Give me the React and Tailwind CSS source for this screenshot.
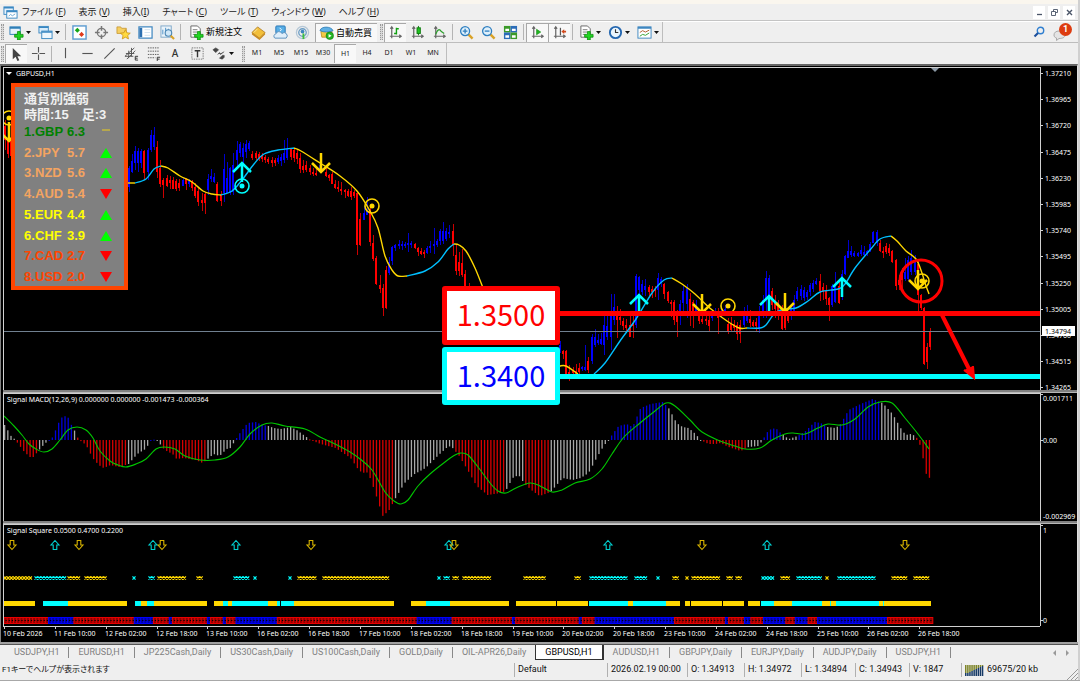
import { clsx } from 'clsx'

const STEP = 3.178
const YELLOW = '#ffd700'
const CYAN = '#00ffff'

const MENUS = [
  ['ファイル ', 'F'],
  ['表示 ', 'V'],
  ['挿入', 'I'],
  ['チャート ', 'C'],
  ['ツール ', 'T'],
  ['ウィンドウ ', 'W'],
  ['ヘルプ ', 'H'],
]

const STRENGTH = [
  { code: 'GBP', value: '6.3', dir: 'flat', color: 'text-[#008000]' },
  { code: 'JPY', value: '5.7', dir: 'up', color: 'text-[#f4a460]' },
  { code: 'NZD', value: '5.6', dir: 'up', color: 'text-[#f4a460]' },
  { code: 'AUD', value: '5.4', dir: 'down', color: 'text-[#f4a460]' },
  { code: 'EUR', value: '4.4', dir: 'up', color: 'text-[#ffff00]' },
  { code: 'CHF', value: '3.9', dir: 'up', color: 'text-[#ffff00]' },
  { code: 'CAD', value: '2.7', dir: 'down', color: 'text-[#ff4500]' },
  { code: 'USD', value: '2.0', dir: 'down', color: 'text-[#ff4500]' },
]

const TABS = [
  'USDJPY,H1', 'EURUSD,H1', 'JP225Cash,Daily', 'US30Cash,Daily', 'US100Cash,Daily', 'GOLD,Daily',
  'OIL-APR26,Daily', 'GBPUSD,H1', 'AUDUSD,H1', 'GBPJPY,Daily', 'EURJPY,Daily', 'AUDJPY,Daily', 'USDJPY,H1',
]

const PRICES = [
  '1.37210', '1.36965', '1.36720', '1.36475', '1.36230', '1.35985', '1.35740',
  '1.35495', '1.35250', '1.35005', '1.34760', '1.34515', '1.34265',
]

const TIMES = [
  '10 Feb 2026', '11 Feb 10:00', '12 Feb 02:00', '12 Feb 18:00', '13 Feb 10:00', '16 Feb 02:00', '16 Feb 18:00',
  '17 Feb 10:00', '18 Feb 02:00', '18 Feb 18:00', '19 Feb 10:00', '20 Feb 02:00', '20 Feb 18:00', '23 Feb 10:00',
  '24 Feb 02:00', '24 Feb 18:00', '25 Feb 10:00', '26 Feb 02:00', '26 Feb 18:00',
]

// one run per visible stretch: first x, then "side high low [open close]"
const CANDLES = [
  [5, 'R 120 150 126 140,R 126 158 138 154,R 130 158 140 156'],
  [128.5, 'B 166 192 168 187,B 154 173 161 172,B 146 170 151 163,B 148 172 151 163,B 149 168 151 163,R 150 180 151 173,B 148 180 150 172,B 130 152 135 150,B 127 150 135 147,R 141 178 147 172,R 160 187 168 184,R 178 198 180 185,R 175 187 178 186,R 176 189 180 183,R 177 188 180 189,R 179 191 181 189,R 179 191 183 188,B 178 186 180 186,R 178 190 179 184,B 179 187 181 184,R 180 191 181 188,R 183 198 187 196,R 188 206 191 202,R 193 211 200 203,R 192 214 194 203,B 174 195 179 190,B 169 182 176 179,B 173 183 177 182,R 182 202 184 201,R 191 206 195 201,B 154 202 169 193,B 162 193 178 193,B 167 195 168 192,B 153 195 165 192,B 141 167 150 160,B 142 157 144 153,B 143 163 148 157,B 140 158 144 152,B 141 151 143 149,R 151 160 154 158,R 151 160 153 158,R 152 161 154 158,R 153 162 156 159,R 155 163 157 160,R 157 164 159 162,R 157 167 160 163,R 158 166 160 163,B 155 164 158 162,B 154 166 157 161,B 140 163 153 160,B 138 160 149 158,R 148 160 149 157,R 148 162 150 158,R 149 164 153 159,R 153 173 158 169,R 160 173 166 170,R 161 172 165 170,R 165 175 168 172,R 168 176 172 174,R 169 176 173 175,B 165 172 169 171,B 168 172 170 172,R 168 177 172 176,R 174 181 175 178,R 172 184 174 184,R 180 189 184 188,R 181 192 187 189,R 182 195 189 191,R 189 198 190 192,R 189 197 191 196,R 187 200 191 197,R 190 198 192 196,R 193 255 193 245,R 213 246 219 245,B 206 220 213 220,B 197 215 211 215,R 205 246 209 242,R 235 261 243 259,R 256 285 258 284,R 275 293 285 289,R 284 316 288 308,R 266 309 270 308,B 257 275 262 273,B 246 265 247 261,B 244 251 245 248,B 240 249 244 246,B 241 250 244 246,B 242 248 244 246,B 233 252 243 245,B 241 248 243 245,R 243 249 244 248,R 247 256 248 252,R 248 255 251 254,R 250 258 252 254,B 246 254 248 253,B 241 253 246 248,B 228 254 244 246,B 239 247 241 245,B 229 245 231 241,B 222 244 231 241,B 228 241 231 239,B 225 238 232 234,R 224 256 231 245,R 244 275 255 271,R 252 276 262 271,R 249 277 263 275,R 270 290 274 286,R 283 290 286 290'],
  [560, 'B 341 353 345 350,R 350 359 351 354,R 350 379 351 374,R 365 381 372 376,R 367 374 371 373,R 364 376 371 374,R 363 374 368 372,B 366 371 367 369,B 345 371 367 370,R 357 373 361 370,B 334 364 337 361,B 329 347 337 345,B 334 345 340 343,B 333 345 339 344,B 315 355 325 345,B 315 340 326 337,B 294 350 311 337,B 294 325 307 320,R 306 338 316 320,R 309 325 317 320,R 318 330 321 326,R 319 333 325 328,R 315 337 325 337,R 314 338 323 326,B 274 328 276 325,B 276 296 277 290,B 280 295 284 292,B 279 296 286 290,R 285 296 287 292,R 286 298 289 292,R 286 297 289 291,B 273 300 278 290,B 277 287 279 283,R 283 299 284 294,R 291 303 292 301,R 300 317 302 304,R 300 325 302 320,R 310 337 313 322,B 300 325 304 315,B 286 312 291 303,B 284 318 288 304,R 293 326 299 315,R 300 328 302 312,B 300 315 306 312,R 313 324 316 321,R 314 324 319 322,R 316 325 319 321,R 315 332 320 326,B 312 321 314 318,B 308 316 312 315,R 308 334 314 318,B 310 318 312 316,B 305 315 309 313,R 318 334 324 331,R 317 332 324 330,R 320 331 324 328,R 322 340 325 334,R 320 343 325 334,B 307 327 315 325,B 305 323 313 321,R 310 327 319 323,R 320 327 322 326,R 318 331 322 326,B 306 333 312 328,B 295 318 300 314,B 271 318 278 300,B 275 300 278 296,R 288 310 291 305,R 295 318 303 309,R 300 320 306 312,R 305 330 310 329,R 312 330 315 328,R 313 323 316 321,B 305 320 308 316,B 295 315 300 312,B 287 301 291 299,B 285 300 289 296,B 287 301 290 298,B 290 300 292 297,B 283 296 285 292,B 280 292 283 289,B 278 285 281 284,R 274 301 281 291,R 283 300 287 292,R 285 305 291 299,R 297 321 298 305,B 284 307 286 305,B 272 303 286 302,R 282 304 286 303,B 270 300 274 290,B 255 275 256 274,B 240 258 251 258,B 246 257 251 255,B 251 257 253 256,B 252 257 253 256,B 245 256 250 254,B 246 256 252 255,B 250 256 251 253,B 242 252 244 250,B 231 243 232 243,B 230 246 232 243,R 240 252 243 251,R 247 258 251 253,R 243 254 246 252,R 244 256 248 253,R 250 263 251 262,R 259 290 260 286,R 275 290 280 285,R 268 288 274 280,B 258 281 272 279,B 256 281 260 279,B 250 275 258 272,B 255 275 262 272,R 261 311 264 295,R 294 310 295 308,R 307 365 308 364,R 343 369 347 362,R 328 350 331 347'],
]

const AVERAGE = [
  [YELLOW, '128,183 135,183'],
  ['#00bfff', '135,183 146,179 154,169 161,166'],
  [YELLOW, '161,166 168,168 180,176 192,182 203,191 212,194 221,195'],
  ['#00bfff', '221,195 232,191 242,180 254,164 264,154 278,150 294,148'],
  [YELLOW, '294,148 301,151 320,163 340,176 357,191 370,211 378,228 385,256 392,270 398,276 407,276'],
  ['#00bfff', '407,276 425,271 438,262 448,249 454,244'],
  [YELLOW, '454,244 459,245 466,251 475,268 483,288'],
  [YELLOW, '560,366 566,366 578,374'],
  ['#00bfff', '594,374 605,363 620,341 636,319 652,293 664,280 672,278'],
  [YELLOW, '672,278 682,284 695,294 711,309 727,321 739,328 747,328'],
  ['#00bfff', '747,328 760,328 766,325 775,313 785,309 796,308 808,301 820,292 838,289 845,284 855,268 870,250 880,239 891,236'],
  [YELLOW, '891,236 897,241 906,251 916,259 922,273 925,283 929,294'],
]

const MACD_KEYS = [
  [4, 15], [7, 10], [11, 3], [14, 1], [17, -3], [23, -11], [29, -17], [33, -17], [36, -13], [41, -7], [46, -2], [50, 0],
  [52, 3], [55, 10], [60, 22], [65, 24], [68, 22], [72, 12], [75, 8], [78, 0], [82, -2], [86, -6], [92, -18], [98, -25],
  [103, -28], [110, -25], [118, -27], [128, -24], [133, -18], [138, -13], [145, -9], [150, -1], [155, 1], [158, -1],
  [161, -7], [166, -11], [172, -14], [176, -19], [183, -18], [195, -20], [202, -23], [207, -19], [213, -14], [219, -16],
  [226, -9], [230, -8], [233, -3], [236, 2], [240, 8], [247, 17], [255, 18], [262, 15], [268, 14], [273, 12], [280, 11],
  [290, 13], [296, 10], [303, 5], [310, 0], [320, -4], [335, -8], [350, -18], [358, -30], [362, -33], [366, -32],
  [370, -39], [377, -60], [382, -76], [388, -71], [395, -58], [404, -43], [414, -34], [425, -28], [438, -15], [448, -6],
  [452, -8], [458, -15], [467, -30], [476, -46], [487, -55], [500, -53], [505, -51], [512, -38], [518, -35], [524, -44],
  [532, -51], [539, -56], [550, -52], [562, -38], [572, -40], [580, -38], [588, -33], [596, -18], [603, -6], [608, 0],
  [612, 6], [618, 14], [626, 16], [632, 13], [640, 32], [650, 36], [662, 38], [668, 32], [676, 17], [682, 13], [688, 12],
  [695, 6], [700, 0], [708, -4], [715, -4], [720, -3], [728, -7], [740, -11], [748, -7], [758, -6], [762, 0], [768, 10],
  [775, 12], [780, 7], [788, 1], [797, 4], [805, 9], [814, 18], [820, 17], [827, 13], [835, 12], [840, 16], [848, 30],
  [860, 36], [872, 41], [882, 37], [892, 26], [900, 12], [905, 5], [910, 6], [915, 4], [918, -1], [921, -10], [925, -33],
  [928, -37], [931, -40],
]

const MACD_COLORS = [
  [15, 'G'], [38, 'R'], [47, 'G'], [73, 'B'], [76, 'G'], [127, 'R'], [150, 'G'], [156, 'B'], [161, 'G'], [206, 'R'],
  [234, 'G'], [266, 'B'], [308, 'G'], [393, 'R'], [455, 'G'], [504, 'R'], [523, 'G'], [548, 'R'], [609, 'G'], [666, 'B'],
  [702, 'G'], [745, 'R'], [763, 'G'], [782, 'B'], [797, 'G'], [826, 'B'], [839, 'G'], [880, 'B'], [915, 'G'], [999, 'R'],
]

const SIGNAL =
  '4,416 14,426 22,435 29,444 36,449 44,452 52,449 60,440 68,430 77,427 86,430 93,438 100,451 110,461 118,465 126,467 136,464 146,459 156,449 164,447 175,449 185,456 200,460 215,460 228,457 240,447 250,434 262,425 272,423 285,426 305,429 320,437 335,444 350,452 360,459 372,470 385,492 394,501 401,504 408,500 418,486 430,474 445,462 455,455 461,453 468,455 478,467 490,483 498,491 506,493 516,488 530,483 540,486 552,492 562,490 575,483 590,479 602,469 612,454 624,437 640,423 655,411 666,403 675,406 690,420 702,432 720,441 735,446 745,449 760,448 772,440 785,434 793,433 805,434 818,428 828,424 842,425 855,419 868,407 880,402 892,403 905,418 918,434 929,449'

const CROSSES = [
  ['Y', 5, 33], ['C', 36, 66], ['Y', 69, 80], ['Y', 86, 106], ['C', 134, 135], ['C', 150, 154], ['Y', 159, 186],
  ['Y', 198, 204], ['C', 235, 249], ['C', 255, 256], ['C', 290, 291], ['Y', 299, 315], ['Y', 324, 389], ['C', 439, 440],
  ['C', 445, 449], ['Y', 454, 458], ['Y', 464, 491], ['Y', 525, 545], ['Y', 576, 580], ['C', 591, 627], ['C', 636, 646],
  ['C', 658, 659], ['Y', 674, 678], ['Y', 687, 688], ['Y', 693, 719], ['Y', 728, 732], ['Y', 737, 741], ['C', 763, 773],
  ['Y', 782, 789], ['C', 798, 821], ['Y', 827, 828], ['C', 839, 874], ['Y', 893, 907], ['Y', 915, 929],
]

const SQUARES = [
  ['Y', 4, 35], ['C', 43, 68], ['Y', 68, 127], ['C', 135, 141], ['Y', 141, 147], ['C', 147, 154], ['Y', 154, 207],
  ['Y', 214, 223], ['C', 223, 228], ['Y', 228, 232], ['C', 232, 268], ['Y', 268, 277], ['C', 277, 280], ['C', 281, 294],
  ['Y', 294, 394], ['Y', 411, 426], ['C', 426, 450], ['Y', 450, 509], ['Y', 516, 556], ['Y', 557, 588], ['C', 589, 628],
  ['Y', 628, 633], ['C', 633, 666], ['Y', 666, 680], ['Y', 685, 690], ['Y', 691, 722], ['Y', 723, 744], ['Y', 748, 760],
  ['C', 761, 774], ['Y', 774, 792], ['C', 792, 822], ['Y', 822, 830], ['C', 830, 831], ['Y', 831, 836], ['C', 836, 879],
  ['Y', 879, 883], ['C', 883, 884], ['Y', 884, 931],
]

const BLUE_RUNS = [
  [48, 73], [134, 153], [168, 171], [205, 209], [222, 225], [233, 276], [288, 290], [416, 449], [512, 515], [579, 582],
  [593, 674], [724, 727], [744, 750], [762, 784], [794, 807], [816, 887],
]

const MARKS = [
  ['down', 12], ['up', 55], ['down', 79], ['up', 153], ['down', 162], ['up', 236], ['down', 311], ['up', 449],
  ['down', 454], ['up', 608], ['down', 702], ['up', 767], ['down', 905],
]

function toPoints(text) {
  return text.split(' ').map((p) => p.split(',').map(Number))
}

function smooth(text) {
  const p = toPoints(text)
  let d = `M${p[0][0]} ${p[0][1]}`
  for (let i = 0; i < p.length - 1; i++) {
    const a = p[i - 1] || p[i]
    const b = p[i]
    const c = p[i + 1]
    const e = p[i + 2] || c
    d += ` C${b[0] + (c[0] - a[0]) / 6} ${b[1] + (c[1] - a[1]) / 6} ${c[0] - (e[0] - b[0]) / 6} ${c[1] - (e[1] - b[1]) / 6} ${c[0]} ${c[1]}`
  }
  return d
}

function macdAt(x) {
  const i = MACD_KEYS.findIndex((k) => k[0] >= x)
  if (i <= 0) return MACD_KEYS[0][1]
  const [x0, v0] = MACD_KEYS[i - 1]
  const [x1, v1] = MACD_KEYS[i]
  return v0 + ((v1 - v0) * (x - x0)) / (x1 - x0)
}

/* ---------- toolbar pieces ---------- */

function Icon({ children }) {
  return (
    <svg width="15" height="15" viewBox="0 0 16 16" fill="none" className="shrink-0" aria-hidden="true">
      {children}
    </svg>
  )
}

function Caret() {
  return (
    <svg width="5" height="3" viewBox="0 0 5 3" className="shrink-0" aria-hidden="true">
      <path d="M0 0h5L2.500 3z" fill="#111" />
    </svg>
  )
}

function Tool({ label, pressed, menu, children }) {
  return (
    <button
      type="button"
      aria-label={label}
      className={clsx(
        'flex h-[19px] items-center text-[#333]',
        menu ? 'w-[29px] gap-[2px] pl-1' : 'w-[22px] justify-center',
        pressed && 'border-t border-l border-[#a8a8a8] bg-[#f8f8f8]',
      )}
    >
      {children}
      {menu && <Caret />}
    </button>
  )
}

function Divider() {
  return <span className="mx-[2px] h-4 w-px bg-[#b4b4b4]" />
}

function Grip() {
  return <span className="mx-[1px] h-4 w-[3px] border-x border-dotted border-[#9a9a9a] bg-[#d8d8d8]" />
}

const plus = <path d="M9 7h3v3h3v3h-3v3H9v-3H6v-3h3z" fill="#22d422" stroke="#078a07" strokeWidth=".8" />
const axes = <path d="M4 2v12M2 12h12M2.500 4L4 2l1.500 2M12 10.500L14 12l-2 1.500" stroke="#666" strokeWidth="1.300" />

const NewChartIcon = () => (
  <Icon>
    <rect x="1" y="2" width="11" height="8" fill="#e6f2fb" stroke="#2f7fb8" />
    <path d="M1 3h11" stroke="#2f7fb8" strokeWidth="2" />
    {plus}
  </Icon>
)
const ProfilesIcon = () => (
  <Icon>
    <rect x="1" y="1.500" width="10" height="7" fill="#d9ecfa" stroke="#3a88c2" />
    <rect x="4" y="6.500" width="11" height="8" fill="#eef7fd" stroke="#3a88c2" />
    <path d="M1 2.500h10M4 7.500h11" stroke="#3a88c2" strokeWidth="1.500" />
  </Icon>
)
const MarketIcon = () => (
  <Icon>
    <rect x="1" y="1" width="14" height="14" fill="#fff" stroke="#5b9bd0" strokeWidth="1.500" />
    <path d="M3 5.500l2.700-2.700 2.700 2.700-2.700 2.700z" fill="#16a516" />
    <path d="M7.500 10l2.700-2.700 2.700 2.700-2.700 2.700z" fill="#e03a1c" />
  </Icon>
)
const CrossIcon = () => (
  <Icon>
    <circle cx="8" cy="8" r="4.500" stroke="#777" strokeWidth="1.400" />
    <path d="M8 1v5M8 10v5M1 8h5M10 8h5" stroke="#777" strokeWidth="1.600" />
  </Icon>
)
const FavoritesIcon = () => (
  <Icon>
    <path d="M1 2h4l1 1.500h5V9H1z" fill="#f5cf62" stroke="#c4922a" strokeWidth=".8" />
    <path d="M10 5l1.600 3.300 3.600.4-2.700 2.500.8 3.600-3.300-1.800-3.300 1.800.8-3.600-2.700-2.500 3.600-.4z" fill="#ffd93f" stroke="#c88e14" strokeWidth=".8" />
  </Icon>
)
const TerminalIcon = () => (
  <Icon>
    <rect x="1" y="2" width="14" height="12" fill="#fff" stroke="#3f87c0" strokeWidth="1.300" />
    <path d="M3 3v10" stroke="#2c6fb0" strokeWidth="3" />
    <path d="M7 5h6M7 8h6M7 11h6" stroke="#cfe0ee" />
  </Icon>
)
const TesterIcon = () => (
  <Icon>
    <rect x="1" y="1" width="11" height="12" fill="#eaf3fa" stroke="#7fa8c8" />
    <path d="M3 10V5M6 9V3M9 8V4" stroke="#4a90c8" />
    <circle cx="9" cy="8.500" r="3.500" fill="#cfe7f8" stroke="#4a86b4" strokeWidth="1.200" />
    <path d="M11.500 11.500l3.500 3.500" stroke="#d9a227" strokeWidth="2.200" />
  </Icon>
)
const OrderIcon = () => (
  <Icon>
    <path d="M2 1h7l3 3v9H2z" fill="#fff" stroke="#666" />
    <path d="M4 5h5M4 7.500h5M4 10h3" stroke="#777" />
    {plus}
  </Icon>
)
const MetaEditorIcon = () => (
  <Icon>
    <path d="M1 8l6-6 8 6-6 6z" fill="#f2bf3a" stroke="#a8741a" strokeWidth=".8" />
    <path d="M1 8l8 6v2L1 10zM9 14l6-6v2l-6 6z" fill="#c98a1f" />
    <path d="M3 8l4-4" stroke="#fbe7a2" />
  </Icon>
)
const CloudIcon = () => (
  <Icon>
    <rect x="3" y="1" width="10" height="8" rx="1" fill="#58aee6" stroke="#2775b4" />
    <path d="M7 3l2 2-2 2" stroke="#fff" />
    <path d="M2 14a2.500 2.500 0 0 1 1-4.500A3.500 3.500 0 0 1 9.500 9 2.800 2.800 0 0 1 14 14z" fill="#dfeefa" stroke="#5a8fbc" />
  </Icon>
)
const SignalsIcon = () => (
  <Icon>
    <circle cx="8" cy="8" r="6.500" stroke="#b5c7d6" strokeWidth="1.400" />
    <circle cx="8" cy="8" r="4" stroke="#6a9cc4" strokeWidth="1.400" />
    <circle cx="8" cy="7" r="2" fill="#3d85bd" />
    <path d="M9 15V9" stroke="#3fbf3f" strokeWidth="2" />
  </Icon>
)
const AutoIcon = () => (
  <Icon>
    <path d="M2 7l6-4 6 4-1 6H3z" fill="#f3c947" stroke="#b5861a" strokeWidth=".8" />
    <path d="M1 6c1-5 12-5 14 0-4 2-10 2-14 0z" fill="#5fb0e4" stroke="#2b7ab4" strokeWidth=".8" />
    <circle cx="11.500" cy="11.500" r="4" fill="#22b422" stroke="#0b7a0b" strokeWidth=".6" />
    <path d="M10.200 9.500l3.200 2-3.200 2z" fill="#fff" />
  </Icon>
)
const ZoomIcon = ({ minus }) => (
  <Icon>
    <path d="M9.500 9.500L14.500 14.500" stroke="#d9a227" strokeWidth="2.600" />
    <circle cx="6.500" cy="6.500" r="4.800" fill="#dff0fb" stroke="#2f7fc0" strokeWidth="1.400" />
    <path d={minus ? 'M4 6.500h5' : 'M4 6.500h5M6.500 4v5'} stroke="#2f7fc0" strokeWidth="1.400" />
  </Icon>
)
const TileIcon = () => (
  <Icon>
    <rect x="1" y="1" width="7" height="7" fill="#3a9a28" />
    <rect x="8" y="1" width="7" height="7" fill="#2b6cb8" />
    <rect x="1" y="8" width="7" height="7" fill="#2b6cb8" />
    <rect x="8" y="8" width="7" height="7" fill="#3a9a28" />
    <path d="M2.500 4h4v2.500h-4zM9.500 4h4v2.500h-4zM2.500 11h4v2.500h-4zM9.500 11h4v2.500h-4z" fill="#fff" />
  </Icon>
)
const ClockIcon = () => (
  <Icon>
    <circle cx="8" cy="8" r="6" fill="#eaf5fd" stroke="#2467b0" strokeWidth="2" />
    <path d="M8 4.500V8h3" stroke="#333" strokeWidth="1.200" />
  </Icon>
)
const TemplateIcon = () => (
  <Icon>
    <rect x="1" y="2" width="14" height="12" fill="#fff" stroke="#3f87c0" />
    <path d="M1 3h14" stroke="#3f87c0" strokeWidth="2" />
    <path d="M3 8l3-2 3 1.500 4-2" stroke="#b05a2c" />
    <path d="M3 12l3-2 3 1 4-2.500" stroke="#2fa02f" />
  </Icon>
)

function MainToolbar() {
  return (
    <div className="flex h-[21px] items-center border-b border-[#bdbdbd] pr-1">
      <div className="flex h-full items-center border-r border-[#bdbdbd]">
        <Grip />
        <Tool label="新規チャート" menu><NewChartIcon /></Tool>
        <Tool label="組表示" menu><ProfilesIcon /></Tool>
        <Divider />
        <Tool label="気配値表示"><MarketIcon /></Tool>
        <Tool label="データウィンドウ"><CrossIcon /></Tool>
        <Tool label="ナビゲーター"><FavoritesIcon /></Tool>
        <Tool label="ターミナル"><TerminalIcon /></Tool>
        <Tool label="ストラテジーテスター"><TesterIcon /></Tool>
        <Divider />
        <button type="button" className="flex h-[19px] w-16 items-center gap-[2px] pl-[6px] text-[9px] whitespace-nowrap text-black">
          <OrderIcon />新規注文
        </button>
        <Tool label="MetaEditor"><MetaEditorIcon /></Tool>
        <Tool label="VPS"><CloudIcon /></Tool>
        <Tool label="シグナル"><SignalsIcon /></Tool>
        <button type="button" className="mx-[2px] flex h-[19px] w-[62px] items-center gap-[2px] border-t border-l border-[#a8a8a8] bg-[#f8f8f8] pl-[3px] text-[9px] whitespace-nowrap text-black">
          <AutoIcon />自動売買
        </button>
        <Grip />
        <Tool label="バーチャート" pressed>
          <Icon>{axes}<path d="M9 3v7M9 4h2.500M6.500 9H9" stroke="#12a012" strokeWidth="1.500" /></Icon>
        </Tool>
        <Tool label="ローソク足">
          <Icon>{axes}<path d="M9 1v10" stroke="#0b7a0b" /><rect x="7.500" y="3" width="3.500" height="6" fill="#22c522" stroke="#0b7a0b" /></Icon>
        </Tool>
        <Tool label="ラインチャート">
          <Icon>{axes}<path d="M4 10c2-6 4-6 6-3l3 2" stroke="#2fa02f" strokeWidth="1.300" /></Icon>
        </Tool>
        <Divider />
        <Tool label="拡大"><ZoomIcon /></Tool>
        <Tool label="縮小"><ZoomIcon minus /></Tool>
        <Tool label="整列"><TileIcon /></Tool>
        <Divider />
        <Tool label="自動スクロール" pressed>
          <Icon>{axes}<path d="M7 4.500v6L11.500 7.500z" fill="#22b422" stroke="#0b8a0b" strokeWidth=".6" /></Icon>
        </Tool>
        <Tool label="チャートシフト" pressed>
          <Icon>{axes}<path d="M9 3v8" stroke="#555" strokeWidth="1.300" /><path d="M10 7l3-2.500V6h2v2h-2v1.500z" fill="#d2491c" /></Icon>
        </Tool>
        <Divider />
        <Tool label="インディケーター" menu><OrderIcon /></Tool>
        <Tool label="時間足設定" menu><ClockIcon /></Tool>
        <Tool label="定型チャート" menu><TemplateIcon /></Tool>
      </div>
      <div className="ml-auto flex items-center gap-2 pr-[2px]">
        <button type="button" aria-label="検索" className="flex">
          <svg width="12" height="12" viewBox="0 0 12 12" fill="none" aria-hidden="true">
            <circle cx="7.500" cy="4.500" r="3.200" stroke="#2f7fd0" strokeWidth="1.400" />
            <path d="M5 7L1.500 10.500" stroke="#1c4f9c" strokeWidth="2.200" />
          </svg>
        </button>
        <button type="button" aria-label="通知" className="relative flex h-[18px] w-[19px] items-end">
          <svg width="13" height="11" viewBox="0 0 13 11" aria-hidden="true">
            <path d="M6 1c3.500 0 6 1.500 6 4S9.500 8.500 6 8.500L3.500 10.500V8C1.500 7.300 1 6.500 1 5c0-2.500 2-4 5-4z" fill="#e4e4e4" stroke="#aaa" />
          </svg>
          <span className="absolute top-0 right-0 flex size-[13px] items-center justify-center rounded-full bg-[#dd3c10] font-['Roboto',sans-serif] text-[9px] font-bold text-white">1</span>
        </button>
      </div>
    </div>
  )
}

function DrawingToolbar() {
  const frames = ['M1', 'M5', 'M15', 'M30', 'H1', 'H4', 'D1', 'W1', 'MN']
  return (
    <div className="flex h-[21px] items-center">
      <div className="flex h-full items-center border-r border-[#bdbdbd] pr-[2px]">
        <Grip />
        <Tool label="カーソル" pressed>
          <Icon><path d="M4 1v12l3-2.500 2 4.500 2-1-2-4.200h4z" fill="#444" /></Icon>
        </Tool>
        <Tool label="クロスヘア">
          <Icon><path d="M8 1v6M8 9v6M1 8h6M9 8h6" stroke="#555" strokeWidth="1.200" /></Icon>
        </Tool>
        <Divider />
        <Tool label="垂直線"><Icon><path d="M8 2v11" stroke="#555" strokeWidth="1.200" /></Icon></Tool>
        <Tool label="水平線"><Icon><path d="M2.500 8h11" stroke="#555" strokeWidth="1.200" /></Icon></Tool>
        <Tool label="トレンドライン"><Icon><path d="M2.500 13.500l11-11" stroke="#555" strokeWidth="1.200" /></Icon></Tool>
        <Tool label="チャネル">
          <Icon><path d="M1 11l10-9M3 14l9-9M2 8h9M1 11h9M5 5v8M8 2v9" stroke="#555" /><path d="M15 11h-3v4h3M12 13h2.500" stroke="#333" /></Icon>
        </Tool>
        <Tool label="フィボナッチ">
          <Icon><path d="M2 2h12M2 5.500h12M2 9h12M2 12.500h8" stroke="#555" strokeDasharray="1.500 1" /><path d="M12 16v-4h3M12 14h2.500" stroke="#333" /></Icon>
        </Tool>
        <Tool label="テキスト"><span className="text-[10px] font-medium">A</span></Tool>
        <Tool label="テキストラベル">
          <Icon><rect x="2" y="2" width="12" height="12" stroke="#777" strokeDasharray="1.500 1" /><path d="M5 5h6M8 5v7" stroke="#333" strokeWidth="1.500" /></Icon>
        </Tool>
        <Tool label="矢印" menu>
          <Icon><path d="M1 4l3-2 3 2-3 3zM6 9l2-2 1 2 4-3M8 13l3-3h2v2l-2 2z" fill="#444" stroke="#444" strokeWidth=".7" /></Icon>
        </Tool>
        <span className="w-1" />
        <Grip />
        {frames.map((f) => (
          <button
            key={f}
            type="button"
            className={clsx(
              "h-[19px] w-[22px] font-['Noto_Sans',sans-serif] text-[7px] text-[#222]",
              f === 'H1' && 'border-t border-l border-[#a8a8a8] bg-[#f8f8f8]',
            )}
          >
            {f}
          </button>
        ))}
      </div>
    </div>
  )
}

/* ---------- chart ---------- */

function Candles() {
  return CANDLES.map(([start, run]) =>
    run.split(',').map((item, i) => {
      const [side, h, l, t, b] = item.split(' ')
      const x = Math.round(start + i * (STEP - (start > 500 ? 0.012 : 0)))
      const color = side === 'R' ? '#ff0000' : '#0000ff'
      return (
        <g key={`${start}-${i}`} fill={color}>
          <rect x={x} y={h} width="1" height={l - h} opacity=".8" />
          <rect x={x - 1} y={t} width="2" height={Math.max(b - t, 1)} />
        </g>
      )
    }),
  )
}

function Arrow({ x, y, up }) {
  const d = up ? 'M0 20V2M-9 10L0 1L9 10' : 'M0 0V18M-9 10L0 19L9 10'
  return <path d={d} transform={`translate(${x} ${y})`} stroke={up ? CYAN : YELLOW} strokeWidth="2.500" fill="none" />
}

function Ring({ x, y, color }) {
  return (
    <g>
      <circle cx={x} cy={y} r="7" fill="none" stroke={color} strokeWidth="1.600" />
      <circle cx={x} cy={y} r="2.500" fill={color} />
    </g>
  )
}

function Trend({ dir }) {
  return (
    <svg width="12" height="10" viewBox="0 0 12 10" className="ml-auto" aria-hidden="true">
      {dir === 'up' && <path d="M6 0l6 10H0z" fill="#00ff00" />}
      {dir === 'down' && <path d="M0 0h12L6 10z" fill="#ff0000" />}
      {dir === 'flat' && <path d="M2 3h8" stroke="#c8b43c" strokeWidth="1.500" />}
    </svg>
  )
}

function StrengthPanel() {
  return (
    <div className="absolute top-4 left-[8px] w-[117px] border-4 border-[#ff4500] bg-[#808080] pt-1 pr-3 pl-[9px] font-['Liberation_Sans','Noto_Sans_CJK_JP',sans-serif] text-[13px] font-bold">
      <div className="leading-4 whitespace-pre text-[#f0f0f0]">
        <p>通貨別強弱</p>
        <p>時間:15　足:3</p>
      </div>
      <ol className="flex h-[163px] flex-col justify-between leading-[18px]">
        {STRENGTH.map((s, i) => (
          <li key={s.code} className={clsx('flex items-center', s.color)}>
            <span className="w-[11px]">{i + 1}.</span>
            <span className="w-8">{s.code}</span>
            <span>{s.value}</span>
            <Trend dir={s.dir} />
          </li>
        ))}
      </ol>
    </div>
  )
}

const PLOT = 'block w-full border-t border-l border-[#d0d0d0]'
const AXIS = 'block w-[37px] shrink-0 overflow-visible border-l border-[#d0d0d0]'

function PricePanel() {
  return (
    <div className="flex h-[323px]">
      <div className="relative min-w-0 flex-1">
        <svg className={clsx(PLOT, 'h-full')} role="img" aria-label="GBPUSD H1">
          <g transform="translate(-4 -68)">
            <g shapeRendering="crispEdges"><Candles /></g>
            <line x1="4" x2="200%" y1="331.500" y2="331.500" stroke="#708090" />
            {AVERAGE.map(([color, pts]) => (
              <path key={pts} d={smooth(pts)} stroke={color} strokeWidth="1.400" fill="none" />
            ))}
            <Arrow x={9} y={122} />
            <Ring x={9} y={118} color={YELLOW} />
            <Arrow x={242} y={162} up />
            <Ring x={242} y={186} color={CYAN} />
            <Arrow x={321} y={153} />
            <Ring x={372} y={206} color={YELLOW} />
            <Arrow x={639} y={294} up />
            <Arrow x={702} y={294} />
            <Ring x={728} y={306} color={YELLOW} />
            <Arrow x={769} y={295} up />
            <Arrow x={785} y={293} />
            <Arrow x={842} y={277} up />
            <Arrow x={918} y={270} />
            <Ring x={922} y={281} color={YELLOW} />
            <path d="M931 68h8l-4 4z" fill="#8a97a4" />
            <line x1="556" x2="200%" y1="313.500" y2="313.500" stroke="#ff0000" strokeWidth="5" />
            <line x1="556" x2="200%" y1="376.500" y2="376.500" stroke={CYAN} strokeWidth="5" />
            <circle cx="921" cy="281" r="21" fill="none" stroke="#ff0000" strokeWidth="3" />
            <path d="M942 315L971 373" stroke="#ff0000" strokeWidth="4" />
            <path d="M964 370l10 8-1-12" fill="#ff0000" stroke="#ff0000" strokeWidth="2" />
          </g>
        </svg>
        <p className="absolute top-[2px] left-[3px] flex items-center gap-1 text-[7px] leading-[9px] text-white">
          <svg width="6" height="3" viewBox="0 0 6 3" aria-hidden="true"><path d="M0 0h6L3 3z" fill="#fff" /></svg>
          GBPUSD,H1
        </p>
        <StrengthPanel />
        <div className="absolute top-[219px] left-[439px] z-10 flex flex-col gap-[2px] font-['Noto_Sans_CJK_JP',sans-serif] text-[29px]">
          <div className="flex h-[59px] w-[118px] items-center justify-center rounded-[3px] border-[5px] border-[#ff0000] bg-white pb-[3px] text-[#ff0000]">1.3500</div>
          <div className="flex h-[58px] w-[118px] items-center justify-center rounded-[3px] border-[5px] border-[#00ffff] bg-white pb-[3px] text-[#0000ff]">1.3400</div>
        </div>
      </div>
      <svg className={clsx(AXIS, 'h-full')} fontSize="7" fill="#fff">
        {PRICES.map((p, i) => (
          <g key={p}>
            <path d={`M0 ${Math.round(6 + i * 26.200) + 0.500}h2`} stroke="#d0d0d0" />
            <text x="4" y={9 + Math.round(i * 26.200)}>{p}</text>
          </g>
        ))}
        <rect x="1" y="259" width="33" height="10" fill="#fff" />
        <text x="4" y="267" fill="#000">1.34794</text>
      </svg>
    </div>
  )
}

function MacdPanel() {
  const fills = { R: '#d80000', G: '#a8a8a8', B: '#0000dd' }
  const bars = Array.from({ length: 292 }, (_, i) => 4 + i * STEP)
  return (
    <div className="flex h-32">
      <div className="relative min-w-0 flex-1">
        <svg className={clsx(PLOT, 'h-full')} role="img" aria-label="MACD">
          <g transform="translate(-4 -394)">
            {bars.map((x) => {
              const v = macdAt(x)
              const kind = MACD_COLORS.find(([end]) => x < end)[1]
              return <rect key={x} x={x} y={v > 0 ? 440 - v : 440} width="1.300" height={Math.max(Math.abs(v), 1)} fill={fills[kind]} />
            })}
            <path d={smooth(SIGNAL)} stroke="#00c800" strokeWidth="1.100" fill="none" />
          </g>
        </svg>
        <p className="absolute top-[2px] left-1 text-[7px] leading-[9px] text-white">
          Signal MACD(12,26,9) 0.000000 0.000000 -0.001473 -0.000364
        </p>
      </div>
      <svg className={clsx(AXIS, 'h-full')} fontSize="7" fill="#fff">
        <path d="M0 47.500h2M0 1.500h2" stroke="#d0d0d0" />
        <text x="2" y="8">0.001711</text>
        <text x="2" y="50">0.00</text>
        <text x="2" y="126">-0.002969</text>
      </svg>
    </div>
  )
}

function SquarePanel() {
  const tint = (k) => (k === 'Y' ? YELLOW : CYAN)
  const boxes = Array.from({ length: 292 }, (_, i) => 4 + i * STEP)
  return (
    <div className="flex h-[102px]">
      <div className="relative min-w-0 flex-1">
        <svg className={clsx(PLOT, 'h-full')} role="img" aria-label="Signal Square">
          <g transform="translate(-4 -525)" fill="none">
            {MARKS.map(([dir, x]) => (
              <path
                key={x}
                d={dir === 'up' ? 'M0 -4.500L4 0H1.800V4.500H-1.800V0H-4z' : 'M0 4.500L4 0H1.800V-4.500H-1.800V0H-4z'}
                transform={`translate(${x} 545)`}
                stroke={dir === 'up' ? '#00d0d0' : '#d8b400'}
                strokeWidth="1.100"
              />
            ))}
            {CROSSES.map(([k, from, to]) => {
              let d = ''
              for (let x = from; x <= to; x += STEP) d += `M${x - 1.500} 576.300l3 3.400M${x + 1.500} 576.300l-3 3.400`
              return <path key={from} d={d} stroke={tint(k)} strokeWidth="1.200" />
            })}
            {SQUARES.map(([k, from, to]) => (
              <rect key={from} x={from} y="601" width={to - from} height="5" fill={tint(k)} />
            ))}
            {boxes.map((x) => {
              const blue = BLUE_RUNS.some(([a, b]) => x >= a && x <= b)
              return (
                <rect key={x} x={x} y="617.500" width="4" height="6" fill={blue ? '#0000a0' : '#900000'} stroke={blue ? '#0000ff' : '#e80000'} />
              )
            })}
            <path d="M5.500 620.500H932" stroke="#000" strokeDasharray="1.200 1.978" />
          </g>
        </svg>
        <p className="absolute top-[2px] left-1 text-[7px] leading-[9px] text-white">Signal Square 0.0500 0.4700 0.2200</p>
      </div>
      <svg className={clsx(AXIS, 'h-full')} fontSize="7" fill="#fff">
        <path d="M0 1.500h2M0 96.500h2" stroke="#d0d0d0" />
        <text x="2" y="9">1</text>
        <text x="2" y="99">0</text>
      </svg>
    </div>
  )
}

function TimeAxis() {
  return (
    <div className="flex h-4">
      <svg className="block h-full min-w-0 flex-1 border-t border-[#d0d0d0]" fontSize="7" fill="#fff">
        {TIMES.map((t, i) => (
          <g key={t}>
            <path d={`M${Math.round(1 + i * 50.850) + 0.500} 0v2`} stroke="#d0d0d0" />
            <text x={Math.round(i * 50.850)} y="9">{t}</text>
          </g>
        ))}
      </svg>
      <span className="w-[37px]" />
    </div>
  )
}

const Splitter = () => <div className="h-[3px] border-b border-[#b8b8b8] bg-[#808080]" />

/* ---------- frame ---------- */

function MenuBar() {
  const box = 'flex h-[13px] w-3 items-center justify-center bg-white text-[#4a5568]'
  return (
    <div className="flex h-4 items-center pl-[3px]">
      <Icon>
        <rect x="1" y="2" width="10" height="8" fill="#e6f2fb" stroke="#3a88c2" />
        <rect x="4" y="6" width="11" height="8" fill="#fff" stroke="#3a88c2" />
        <path d="M1 3h10M4 7h11" stroke="#3a88c2" strokeWidth="1.500" />
        <path d="M6 12l2-2 2 1.500 3-2" stroke="#6aa5d2" />
      </Icon>
      <nav className="ml-1 flex gap-[13px] text-[9px] leading-4 [font-feature-settings:'palt'] text-[#222]">
        {MENUS.map(([name, key]) => (
          <button key={key} type="button" className="whitespace-nowrap">
            {name}(<u>{key}</u>)
          </button>
        ))}
      </nav>
      <div className="mr-[3px] ml-auto flex gap-[3px]">
        <button type="button" aria-label="最小化" className={box}>
          <svg width="7" height="7" viewBox="0 0 7 7"><path d="M1 5.500h5" stroke="currentColor" strokeWidth="1.300" /></svg>
        </button>
        <button type="button" aria-label="元に戻す" className={box}>
          <svg width="7" height="7" viewBox="0 0 7 7" fill="none"><path d="M2.500 2.500v-2h4v3h-2M.5 2.500h4v4h-4z" stroke="currentColor" strokeWidth=".9" /></svg>
        </button>
        <button type="button" aria-label="閉じる" className={box}>
          <svg width="7" height="7" viewBox="0 0 7 7"><path d="M1 1l5 5M6 1L1 6" stroke="currentColor" strokeWidth="1.400" /></svg>
        </button>
      </div>
    </div>
  )
}

function ChartTabs() {
  return (
    <div className="flex h-4 items-center border-t border-[#555] pl-[5px] font-['Roboto',sans-serif] text-[9px] text-[#808080]">
      {TABS.map((t, i) => (
        <button
          key={i}
          type="button"
          className={clsx(
            'px-[9px] leading-[11px] whitespace-nowrap',
            t === 'GBPUSD,H1'
              ? 'h-[15px] border-r-2 border-b border-l border-[#333] bg-white text-black'
              : 'border-r border-[#888]',
            i === 6 && 'border-r-0',
          )}
        >
          {t}
        </button>
      ))}
      <div className="mr-2 ml-auto flex gap-[10px]">
        <button type="button" aria-label="前へ"><svg width="4" height="6" viewBox="0 0 4 6"><path d="M4 0v6L1 3z" fill="#999" /></svg></button>
        <button type="button" aria-label="次へ"><svg width="4" height="6" viewBox="0 0 4 6"><path d="M0 0v6l3-3z" fill="#999" /></svg></button>
      </div>
    </div>
  )
}

function StatusBar() {
  const cell = 'flex h-[14px] items-center border-l border-[#b0b0b0] pl-[3px] whitespace-nowrap'
  const levels = [3, 3, 4, 5, 6, 7, 8, 9, 10]
  return (
    <footer className="flex h-5 items-center font-['Roboto','Noto_Sans_CJK_JP',sans-serif] text-[9px] text-[#111]">
      <span className="flex-1 pl-[2px] text-[8px] [font-feature-settings:'palt']">F1キーでヘルプが表示されます</span>
      <span className={clsx(cell, 'w-[93px]')}>Default</span>
      <span className={clsx(cell, 'w-20')}>2026.02.19 00:00</span>
      <span className={clsx(cell, 'w-[57px]')}>O: 1.34913</span>
      <span className={clsx(cell, 'w-[57px]')}>H: 1.34972</span>
      <span className={clsx(cell, 'w-[54px]')}>L: 1.34894</span>
      <span className={clsx(cell, 'w-[54px]')}>C: 1.34943</span>
      <span className={clsx(cell, 'w-[52px]')}>V: 1847</span>
      <span className={clsx(cell, 'w-[106px] gap-[3px]')}>
        <svg width="19" height="11" viewBox="0 0 19 11" aria-hidden="true">
          {levels.map((h, i) => (
            <g key={i}>
              <rect x={i * 2.100} y="0" width="1.500" height={11 - h} fill="#7d8428" />
              <rect x={i * 2.100} y={11 - h} width="1.500" height={h} fill="#173a66" />
            </g>
          ))}
        </svg>
        69675/20 kb
      </span>
      <svg width="11" height="11" viewBox="0 0 11 11" className="self-end" aria-hidden="true">
        <path d="M0 11L11 0M4 11l7-7M8 11l3-3" stroke="#999" />
      </svg>
    </footer>
  )
}

export default function App() {
  return (
    <div className="min-h-screen w-full bg-[#a8a8a8] font-['Noto_Sans','Noto_Sans_CJK_JP',sans-serif]">
      <div className="border-r-2 border-[#d0d0d0] bg-[#efefef]">
        <header>
          <div className="h-1 bg-[#faf6ee]" />
          <MenuBar />
          <div className="h-[2px] border-t border-[#c4c4c4] bg-white" />
          <MainToolbar />
          <DrawingToolbar />
        </header>
        <main className="border-t-2 border-r border-l border-t-[#666] border-r-[#e0e0e0] border-l-[#808080] bg-black pt-px pl-[2px]">
          <PricePanel />
          <Splitter />
          <MacdPanel />
          <Splitter />
          <SquarePanel />
          <TimeAxis />
        </main>
        <div className="h-[2px] bg-[#a0a0a0]" />
        <ChartTabs />
        <StatusBar />
      </div>
    </div>
  )
}
